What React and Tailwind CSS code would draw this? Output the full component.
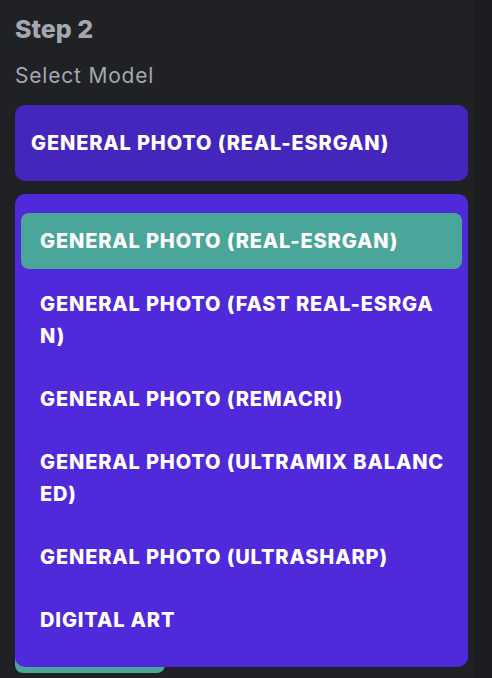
import React from "react";

const models = [
  { lines: ["GENERAL PHOTO (REAL-ESRGAN)"], active: true },
  { lines: ["GENERAL PHOTO (FAST REAL-ESRGA", "N)"] },
  { lines: ["GENERAL PHOTO (REMACRI)"] },
  { lines: ["GENERAL PHOTO (ULTRAMIX BALANC", "ED)"] },
  { lines: ["GENERAL PHOTO (ULTRASHARP)"] },
  { lines: ["DIGITAL ART"] },
];

export default function App() {
  return (
    <div
      className="flex min-h-[678px] w-full bg-[#1b1d20]"
      style={{ fontFamily: "Inter, 'Open Sans', sans-serif" }}
    >
      <div className="flex w-[474px] flex-col bg-[#1f2125] pl-[15px] pr-[6px] pt-[13px]">
        <h2 className="text-[25px] font-extrabold leading-[32px] text-[#a4a7b0]">Step 2</h2>
        <p className="mt-[17px] text-[21px] font-normal leading-[28px] tracking-[0.8px] text-[#a4a7b0]">
          Select Model
        </p>

        <div className="relative mt-[15px]">
          <button className="flex h-[76px] w-[453px] items-center rounded-[10px] bg-[#4526bd] px-[16px] text-left text-[20px] font-extrabold leading-[32px] tracking-[0.86px] text-white">
            GENERAL PHOTO (REAL-ESRGAN)
          </button>

          {/* open model menu */}
          <ul className="absolute left-0 top-full z-10 mt-[13px] flex w-[453px] flex-col gap-[7px] rounded-[10px] bg-[#5029db] px-[6px] py-[19px]">
            {models.map((m, i) => (
              <li
                key={i}
                className={
                  "rounded-[8px] px-[19px] py-[12px] text-[20px] font-extrabold leading-[32px] tracking-[0.86px] text-white " +
                  (m.active ? "bg-[#4aa69a]" : "")
                }
              >
                {m.lines.map((l, j) => (
                  <span key={j} className="block whitespace-nowrap">
                    {l}
                  </span>
                ))}
              </li>
            ))}
          </ul>
        </div>

        <button className="mt-[444px] h-[48px] w-[150px] rounded-[8px] bg-[#4aa69a] text-[16px] font-bold text-white">
          Upscale
        </button>
      </div>
    </div>
  );
}
